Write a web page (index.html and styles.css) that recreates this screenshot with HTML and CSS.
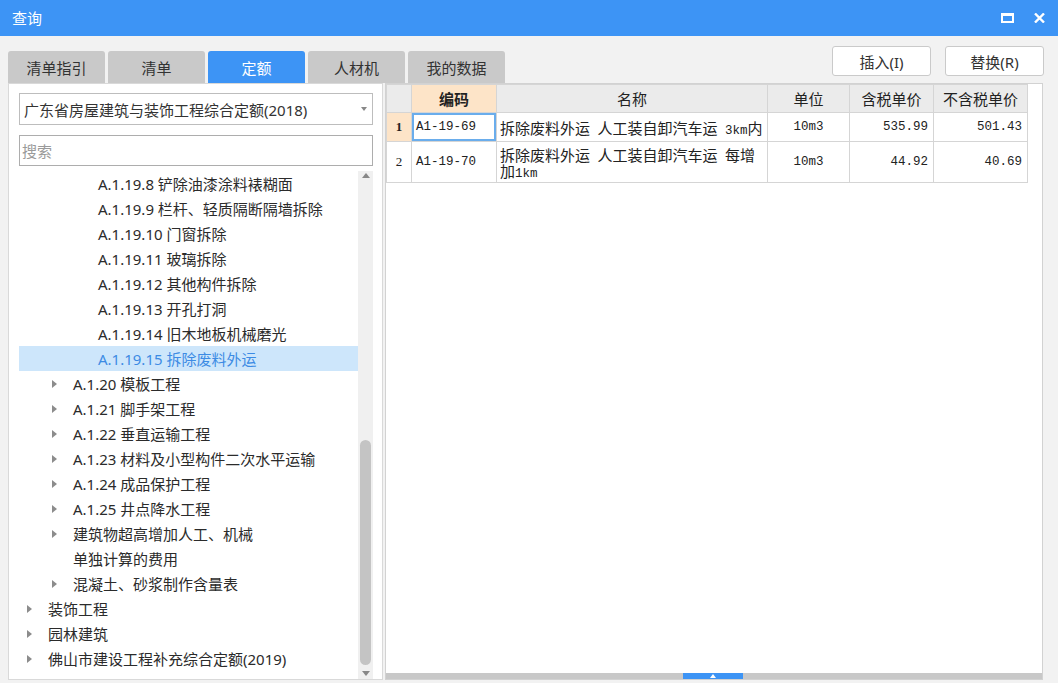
FILE: index.html
```html
<!DOCTYPE html>
<html lang="zh-CN">
<head>
<meta charset="utf-8">
<title>查询</title>
<link rel="stylesheet" href="styles.css">
</head>
<body>
<div class="window">
  <div class="titlebar">
    <span class="title">查询</span>
    <div class="win-ctrls">
      <svg class="ic-max" width="13" height="10" viewBox="0 0 13 10"><path d="M1 1.5H12V9H1Z" fill="none" stroke="#fff" stroke-width="2"/><rect x="0" y="0" width="13" height="3" fill="#fff"/></svg>
      <svg class="ic-close" width="11" height="10" viewBox="0 0 11 10"><path d="M1 0.5L10 9.5M10 0.5L1 9.5" stroke="#fff" stroke-width="2.4"/></svg>
    </div>
  </div>

  <div class="toolbar">
    <div class="tabs">
      <div class="tab">清单指引</div>
      <div class="tab">清单</div>
      <div class="tab active">定额</div>
      <div class="tab">人材机</div>
      <div class="tab">我的数据</div>
    </div>
    <div class="actions">
      <button class="btn">插入(I)</button>
      <button class="btn">替换(R)</button>
    </div>
  </div>

  <div class="main">
    <div class="left">
      <div class="select"><span class="select-text">广东省房屋建筑与装饰工程综合定额(2018)</span><span class="caret"></span></div>
      <div class="search">搜索</div>
      <div class="tree">
        <div class="tree-list">
          <div class="row l3">A.1.19.8 铲除油漆涂料裱糊面</div>
          <div class="row l3">A.1.19.9 栏杆、轻质隔断隔墙拆除</div>
          <div class="row l3">A.1.19.10 门窗拆除</div>
          <div class="row l3">A.1.19.11 玻璃拆除</div>
          <div class="row l3">A.1.19.12 其他构件拆除</div>
          <div class="row l3">A.1.19.13 开孔打洞</div>
          <div class="row l3">A.1.19.14 旧木地板机械磨光</div>
          <div class="row l3 selected">A.1.19.15 拆除废料外运</div>
          <div class="row l2"><span class="arrow"></span>A.1.20 模板工程</div>
          <div class="row l2"><span class="arrow"></span>A.1.21 脚手架工程</div>
          <div class="row l2"><span class="arrow"></span>A.1.22 垂直运输工程</div>
          <div class="row l2"><span class="arrow"></span>A.1.23 材料及小型构件二次水平运输</div>
          <div class="row l2"><span class="arrow"></span>A.1.24 成品保护工程</div>
          <div class="row l2"><span class="arrow"></span>A.1.25 井点降水工程</div>
          <div class="row l2"><span class="arrow"></span>建筑物超高增加人工、机械</div>
          <div class="row l2 leaf">单独计算的费用</div>
          <div class="row l2"><span class="arrow"></span>混凝土、砂浆制作含量表</div>
          <div class="row l1"><span class="arrow"></span>装饰工程</div>
          <div class="row l1"><span class="arrow"></span>园林建筑</div>
          <div class="row l1"><span class="arrow"></span>佛山市建设工程补充综合定额(2019)</div>
        </div>
        <div class="vscroll">
          <div class="sb-up"><span class="tri-up"></span></div>
          <div class="sb-space"></div>
          <div class="sb-thumb"></div>
          <div class="sb-down"><span class="tri-down"></span></div>
        </div>
      </div>
    </div>

    <div class="right">
      <div class="grid-area">
        <table class="grid">
          <colgroup>
            <col class="c-rh"><col class="c-code"><col class="c-name"><col class="c-unit"><col class="c-tax"><col class="c-notax">
          </colgroup>
          <thead>
            <tr class="hrow">
              <th></th>
              <th class="hl">编码</th>
              <th>名称</th>
              <th>单位</th>
              <th>含税单价</th>
              <th>不含税单价</th>
            </tr>
          </thead>
          <tbody>
            <tr class="r1">
              <td class="rh cur">1</td>
              <td class="code sel">A1-19-69</td>
              <td class="name">拆除废料外运<span class="m"> </span>人工装自卸汽车运<span class="m"> 3km</span>内</td>
              <td class="unit">10m3</td>
              <td class="num">535.99</td>
              <td class="num">501.43</td>
            </tr>
            <tr class="r2">
              <td class="rh">2</td>
              <td class="code">A1-19-70</td>
              <td class="name">拆除废料外运<span class="m"> </span>人工装自卸汽车运<span class="m"> </span>每增加<span class="m">1km</span></td>
              <td class="unit">10m3</td>
              <td class="num">44.92</td>
              <td class="num">40.69</td>
            </tr>
          </tbody>
        </table>
      </div>
      <div class="hbar"><div class="hthumb"><span class="tri-w"></span></div></div>
    </div>
  </div>
</div>
</body>
</html>
```
FILE: styles.css
```css
* { box-sizing: border-box; }

body {
  margin: 0;
  width: 1058px;
  height: 683px;
  overflow: hidden;
  background: #F2F2F2;
  font-family: "Noto Sans", "Noto Sans CJK SC", sans-serif;
  color: #333;
}

.window {
  display: flex;
  flex-direction: column;
  height: 683px;
}

/* title bar */
.titlebar {
  height: 36px;
  background: #3D94F5;
  display: flex;
  align-items: center;
  padding: 0 13px 0 12px;
  color: #fff;
  font-size: 15px;
}
.title { flex: 1; line-height: 20px; }
.win-ctrls {
  display: flex;
  align-items: center;
  gap: 20px;
}
.ic-max, .ic-close { display: block; }

/* toolbar */
.toolbar {
  height: 47px;
  display: flex;
  justify-content: space-between;
  padding: 0 14px 0 8px;
}
.tabs {
  display: flex;
  gap: 3px;
  align-self: flex-end;
}
.tab {
  width: 97px;
  height: 32px;
  background: #C9C9C9;
  border-radius: 3px 3px 0 0;
  display: flex;
  align-items: center;
  justify-content: center;
  font-size: 15px;
  color: #333;
}
.tab.active {
  background: #3D94F5;
  color: #fff;
}
.actions {
  display: flex;
  gap: 14px;
  margin-top: 10px;
  align-self: flex-start;
}
.btn {
  width: 99px;
  height: 30px;
  background: #fff;
  border: 1px solid #CACACA;
  border-radius: 3px;
  font-family: "Noto Sans", "Noto Sans CJK SC", sans-serif;
  font-size: 15px;
  color: #333;
  padding: 0;
}

/* main area */
.main {
  height: 600px;
  display: flex;
  gap: 2px;
  padding: 0 15px 3px 8px;
}

.left {
  width: 375px;
  background: #fff;
  border: 1px solid #D9D9D9;
  padding: 9px 9px 0 10px;
  display: flex;
  flex-direction: column;
}
.select {
  height: 32px;
  flex: none;
  border: 1px solid #BDBDBD;
  display: flex;
  align-items: center;
  padding: 0 5px 0 4px;
  font-size: 15px;
  color: #333;
}
.select-text { flex: 1; white-space: nowrap; }
.caret {
  width: 0;
  height: 0;
  border-left: 3.5px solid transparent;
  border-right: 3.5px solid transparent;
  border-top: 4px solid #888;
}
.search {
  height: 31px;
  flex: none;
  margin-top: 10px;
  border: 1px solid #ADADAD;
  padding-left: 2px;
  display: flex;
  align-items: center;
  font-size: 15px;
  color: #9A9A9A;
}

.tree {
  flex: 1;
  min-height: 0;
  margin-top: 5px;
  display: flex;
}
.tree-list { flex: 1; }
.row {
  height: 25px;
  display: flex;
  align-items: center;
  font-size: 15px;
  color: #2B2B2B;
  white-space: nowrap;
}
.row.l1 { padding-left: 8px; }
.row.l2 { padding-left: 33px; }
.row.l2.leaf { padding-left: 54px; }
.row.l3 { padding-left: 79px; }
.row.selected {
  background: #CDE6FB;
  color: #3C8BE4;
}
.arrow {
  width: 0;
  height: 0;
  border-top: 4.5px solid transparent;
  border-bottom: 4.5px solid transparent;
  border-left: 5px solid #8C8C8C;
  margin-right: 16px;
}

.vscroll {
  width: 15px;
  background: #F0F0F0;
  display: flex;
  flex-direction: column;
  align-items: center;
}
.sb-up { height: 14px; flex: none; padding-top: 2px; }
.sb-space { flex: 1; }
.sb-thumb {
  flex: none;
  width: 11px;
  height: 225px;
  background: #C4C4C4;
  border-radius: 6px;
}
.sb-down { height: 14px; flex: none; padding-top: 6px; }
.tri-up, .tri-down {
  display: block;
  width: 0;
  height: 0;
  border-left: 4.5px solid transparent;
  border-right: 4.5px solid transparent;
}
.tri-up { border-bottom: 5px solid #888; }
.tri-down { border-top: 5px solid #888; }

/* right grid */
.right {
  flex: 1;
  background: #fff;
  border: 1px solid #D2D2D2;
  display: flex;
  flex-direction: column;
}
.grid-area { flex: 1; }
.grid {
  border-collapse: collapse;
  table-layout: fixed;
  width: 641px;
}
.c-rh { width: 25px; }
.c-code { width: 85px; }
.c-name { width: 271px; }
.c-unit { width: 82px; }
.c-tax { width: 84px; }
.c-notax { width: 94px; }

.grid th, .grid td {
  border: 1px solid #D5D5D5;
  padding: 0 3px;
  white-space: nowrap;
  overflow: hidden;
}
.grid th {
  height: 28px;
  background: #EBEBEB;
  font-weight: normal;
  font-size: 15px;
  color: #222;
  text-align: center;
  font-family: "Noto Sans CJK SC", sans-serif;
}
.grid th.hl {
  background: #FDE4C8;
  font-weight: bold;
}
.grid td {
  font-family: "Noto Sans CJK SC", sans-serif;
  font-size: 15px;
  color: #222;
  line-height: 16px;
}
.r1 td { height: 29px; }
.r2 td { height: 41px; }
.grid td.rh {
  text-align: center;
  font-family: "Liberation Serif", serif;
  font-size: 13px;
  padding: 0;
}
.grid td.rh.cur {
  background: #FDE4C8;
  font-weight: bold;
}
.grid td.code, .grid td.unit, .grid td.num, .m {
  font-family: "Liberation Mono", monospace;
  font-size: 12.5px;
}
.m { line-height: 0; }
.grid td.code { padding-left: 4px; }
.grid td.sel { box-shadow: inset 0 0 0 2px #6AADEC; }
.grid td.name { white-space: normal; padding-top: 1px; }
.grid td.unit { text-align: center; }
.grid td.num { text-align: right; padding-right: 5px; }

.hbar {
  height: 6px;
  flex: none;
  background: #C8C8C8;
  display: flex;
  padding-left: 297px;
}
.hthumb {
  width: 60px;
  height: 6px;
  background: #3D94F5;
  display: flex;
  justify-content: center;
  align-items: center;
}
.tri-w {
  width: 0;
  height: 0;
  border-left: 3px solid transparent;
  border-right: 3px solid transparent;
  border-bottom: 4px solid #fff;
}
```
